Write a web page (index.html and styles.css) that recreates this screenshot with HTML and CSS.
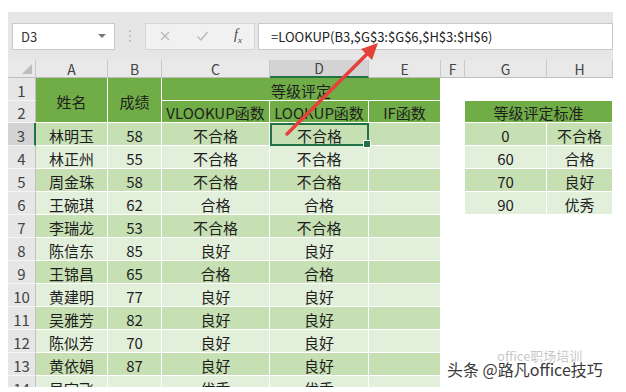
FILE: index.html
```html
<!DOCTYPE html>
<html lang="zh">

<head>
    <meta charset="UTF-8">
    <meta name="viewport" content="width=device-width, initial-scale=1.0">
    <title>LOOKUP</title>
    <link rel="stylesheet" href="styles.css">
</head>

<body>
    <div class="window">
        <div class="formula-bar">
            <div class="name-box"><span>D3</span><i class="caret"></i></div>
            <div class="grip">
                <svg width="4" height="14" viewBox="0 0 4 14"><circle cx="2" cy="2" r="1" fill="#b5b5b5"/><circle cx="2" cy="7" r="1" fill="#b5b5b5"/><circle cx="2" cy="12" r="1" fill="#b5b5b5"/></svg>
            </div>
            <div class="fx-buttons">
                <svg width="12" height="12" viewBox="0 0 12 12"><path d="M2 2 L10 10 M10 2 L2 10" stroke="#b8b8b8" stroke-width="1.3" fill="none"/></svg>
                <svg width="13" height="12" viewBox="0 0 13 12"><path d="M1.5 6.5 L5 10 L11.5 2" stroke="#b8b8b8" stroke-width="1.3" fill="none"/></svg>
                <span class="fx">f<sub>x</sub></span>
            </div>
            <div class="formula">=LOOKUP(B3,$G$3:$G$6,$H$3:$H$6)</div>
        </div>

        <div class="sheet">
            <!-- column headers -->
            <div class="ch corner"><i class="tri"></i></div>
            <div class="ch">A</div>
            <div class="ch">B</div>
            <div class="ch">C</div>
            <div class="ch active">D</div>
            <div class="ch">E</div>
            <div class="ch">F</div>
            <div class="ch">G</div>
            <div class="ch">H</div>

            <!-- row 1 -->
            <div class="rh">1</div>
            <div class="cell hd span-r">姓名</div>
            <div class="cell hd span-r">成绩</div>
            <div class="cell hd low span-3">等级评定</div>
            <div class="blank"></div>
            <div class="blank"></div>
            <div class="blank"></div>

            <!-- row 2 -->
            <div class="rh">2</div>
            <div class="cell hd low">VLOOKUP函数</div>
            <div class="cell hd low">LOOKUP函数</div>
            <div class="cell hd low">IF函数</div>
            <div class="blank"></div>
            <div class="cell hd span-2">等级评定标准</div>

            <div class="rh active">3</div>
            <div class="cell dk">林明玉</div><div class="cell dk">58</div><div class="cell dk">不合格</div><div class="cell dk sel">不合格</div><div class="cell dk"></div>
            <div class="blank"></div><div class="cell dk">0</div><div class="cell dk">不合格</div>

            <div class="rh">4</div>
            <div class="cell lt">林正州</div><div class="cell lt">55</div><div class="cell lt">不合格</div><div class="cell lt">不合格</div><div class="cell lt"></div>
            <div class="blank"></div><div class="cell lt">60</div><div class="cell lt">合格</div>

            <div class="rh">5</div>
            <div class="cell dk">周金珠</div><div class="cell dk">58</div><div class="cell dk">不合格</div><div class="cell dk">不合格</div><div class="cell dk"></div>
            <div class="blank"></div><div class="cell dk">70</div><div class="cell dk">良好</div>

            <div class="rh">6</div>
            <div class="cell lt">王碗琪</div><div class="cell lt">62</div><div class="cell lt">合格</div><div class="cell lt">合格</div><div class="cell lt"></div>
            <div class="blank"></div><div class="cell lt">90</div><div class="cell lt">优秀</div>

            <div class="rh">7</div>
            <div class="cell dk">李瑞龙</div><div class="cell dk">53</div><div class="cell dk">不合格</div><div class="cell dk">不合格</div><div class="cell dk"></div>
            <div class="blank"></div><div class="blank"></div><div class="blank"></div>

            <div class="rh">8</div>
            <div class="cell lt">陈信东</div><div class="cell lt">85</div><div class="cell lt">良好</div><div class="cell lt">良好</div><div class="cell lt"></div>
            <div class="blank"></div><div class="blank"></div><div class="blank"></div>

            <div class="rh">9</div>
            <div class="cell dk">王锦昌</div><div class="cell dk">65</div><div class="cell dk">合格</div><div class="cell dk">合格</div><div class="cell dk"></div>
            <div class="blank"></div><div class="blank"></div><div class="blank"></div>

            <div class="rh">10</div>
            <div class="cell lt">黄建明</div><div class="cell lt">77</div><div class="cell lt">良好</div><div class="cell lt">良好</div><div class="cell lt"></div>
            <div class="blank"></div><div class="blank"></div><div class="blank"></div>

            <div class="rh">11</div>
            <div class="cell dk">吴雅芳</div><div class="cell dk">82</div><div class="cell dk">良好</div><div class="cell dk">良好</div><div class="cell dk"></div>
            <div class="blank"></div><div class="blank"></div><div class="blank"></div>

            <div class="rh">12</div>
            <div class="cell lt">陈似芳</div><div class="cell lt">70</div><div class="cell lt">良好</div><div class="cell lt">良好</div><div class="cell lt"></div>
            <div class="blank"></div><div class="blank"></div><div class="blank"></div>

            <div class="rh">13</div>
            <div class="cell dk">黄依娟</div><div class="cell dk">87</div><div class="cell dk">良好</div><div class="cell dk">良好</div><div class="cell dk"></div>
            <div class="blank"></div><div class="blank"></div><div class="blank"></div>

            <div class="rh">14</div>
            <div class="cell lt">吴宇飞</div><div class="cell lt"></div><div class="cell lt">优秀</div><div class="cell lt">优秀</div><div class="cell lt"></div>
            <div class="blank"></div><div class="blank"></div><div class="blank"></div>
        </div>

        <svg class="arrow" width="626" height="392" viewBox="0 0 626 392">
            <line x1="287" y1="134" x2="367" y2="54" stroke="#e5403a" stroke-width="3.5" stroke-linecap="round"/>
            <polygon points="378,43 372,60 361,49" fill="#e5403a"/>
        </svg>

        <div class="watermark">
            <span class="wm-back">office职场培训</span>
            <span class="wm-front">头条 @路凡office技巧</span>
        </div>
    </div>
</body>

</html>
```

FILE: styles.css
```css
* {
  margin: 0;
  padding: 0;
  box-sizing: border-box;
}

body {
  background-color: #fff;
  font-family: "Noto Sans CJK SC", "Liberation Sans", sans-serif;
  color: #1e1e1e;
}

.window {
  position: relative;
  width: 626px;
  height: 392px;
  padding: 12px 13px 0 8px;
  overflow: hidden;
}

/* formula bar */
.formula-bar {
  display: flex;
  align-items: center;
  height: 48px;
  padding-left: 4px;
  background-color: #e6e6e6;
}

.name-box {
  display: flex;
  align-items: center;
  justify-content: space-between;
  width: 103px;
  height: 27px;
  padding: 0 8px 0 8px;
  background-color: #fff;
  border: 1px solid #c9c9c9;
  font-size: 13px;
  color: #333;
}

.caret {
  width: 0;
  height: 0;
  border-left: 4px solid transparent;
  border-right: 4px solid transparent;
  border-top: 4px solid #777;
}

.grip {
  display: flex;
  justify-content: center;
  width: 30px;
}

.fx-buttons {
  display: flex;
  align-items: center;
  justify-content: space-between;
  width: 110px;
  height: 27px;
  padding: 0 12px 0 13px;
  background-color: #f1f1f1;
  border: 1px solid #d6d6d6;
}

.fx {
  font-family: "Liberation Serif", serif;
  font-style: italic;
  font-size: 14px;
  color: #444;
}

.fx sub {
  font-size: 9px;
}

.formula {
  flex: 1;
  height: 27px;
  margin-left: 3px;
  padding-left: 12px;
  background-color: #fff;
  border: 1px solid #c9c9c9;
  font-size: 13px;
  line-height: 25px;
  color: #222;
}

/* sheet */
.sheet {
  display: grid;
  grid-template-columns: 28px 72px 54px 108px 99px 72px 24px 82px 66px;
  grid-template-rows: 18px 23px 22px repeat(12, 23px);
  height: 327px;
  overflow: hidden;
  font-size: 15px;
}

.ch {
  display: flex;
  align-items: center;
  justify-content: center;
  background-color: #e9e9e9;
  border-right: 1px solid #c9c9c9;
  border-bottom: 1px solid #bdbdbd;
  font-size: 14px;
  color: #444;
}

.ch.active {
  background-color: #d3d3d3;
  border-bottom: 2px solid #217346;
}

.corner {
  position: relative;
}

.tri {
  position: absolute;
  right: 3px;
  bottom: 3px;
  width: 0;
  height: 0;
  border-left: 10px solid transparent;
  border-bottom: 10px solid #bdbdbd;
}

.rh {
  display: flex;
  align-items: center;
  justify-content: center;
  padding-top: 2px;
  background-color: #e6e6e6;
  border-right: 1px solid #c0c0c0;
  border-bottom: 1px solid #f5f5f5;
  color: #444;
}

.rh.active {
  background-color: #d3d3d3;
  border-right: 2px solid #217346;
}

.cell {
  display: flex;
  align-items: center;
  justify-content: center;
  padding-top: 2px;
  white-space: nowrap;
  border-right: 1px solid #fff;
  border-bottom: 1px solid #fff;
}

.hd {
  background-color: #70ad47;
}

.low {
  align-items: flex-end;
  padding-top: 0;
  padding-bottom: 0;
  line-height: 19px;
}

.dk {
  background-color: #c6e0b4;
}

.lt {
  background-color: #e2efda;
}

.span-r {
  grid-row: span 2;
}

.span-2 {
  grid-column: span 2;
}

.span-3 {
  grid-column: span 3;
}

.blank {
  background-color: #fff;
}

.sel {
  position: relative;
  border: 2px solid #217346;
}

.sel::after {
  content: "";
  position: absolute;
  right: -4px;
  bottom: -4px;
  width: 6px;
  height: 6px;
  background-color: #217346;
  border: 1px solid #fff;
}

/* overlays */
.arrow {
  position: absolute;
  left: 0;
  top: 0;
  pointer-events: none;
}

.watermark {
  position: absolute;
  left: 447px;
  top: 346px;
  width: 170px;
  height: 36px;
}

.wm-back {
  position: absolute;
  left: 50px;
  top: 0;
  font-size: 13px;
  color: rgba(150, 150, 150, 0.55);
}

.wm-front {
  position: absolute;
  left: 0;
  top: 11px;
  font-size: 16px;
  color: #3a3a3a;
  text-shadow: 1px 0 0 #fff, -1px 0 0 #fff, 0 1px 0 #fff, 0 -1px 0 #fff;
}
```
